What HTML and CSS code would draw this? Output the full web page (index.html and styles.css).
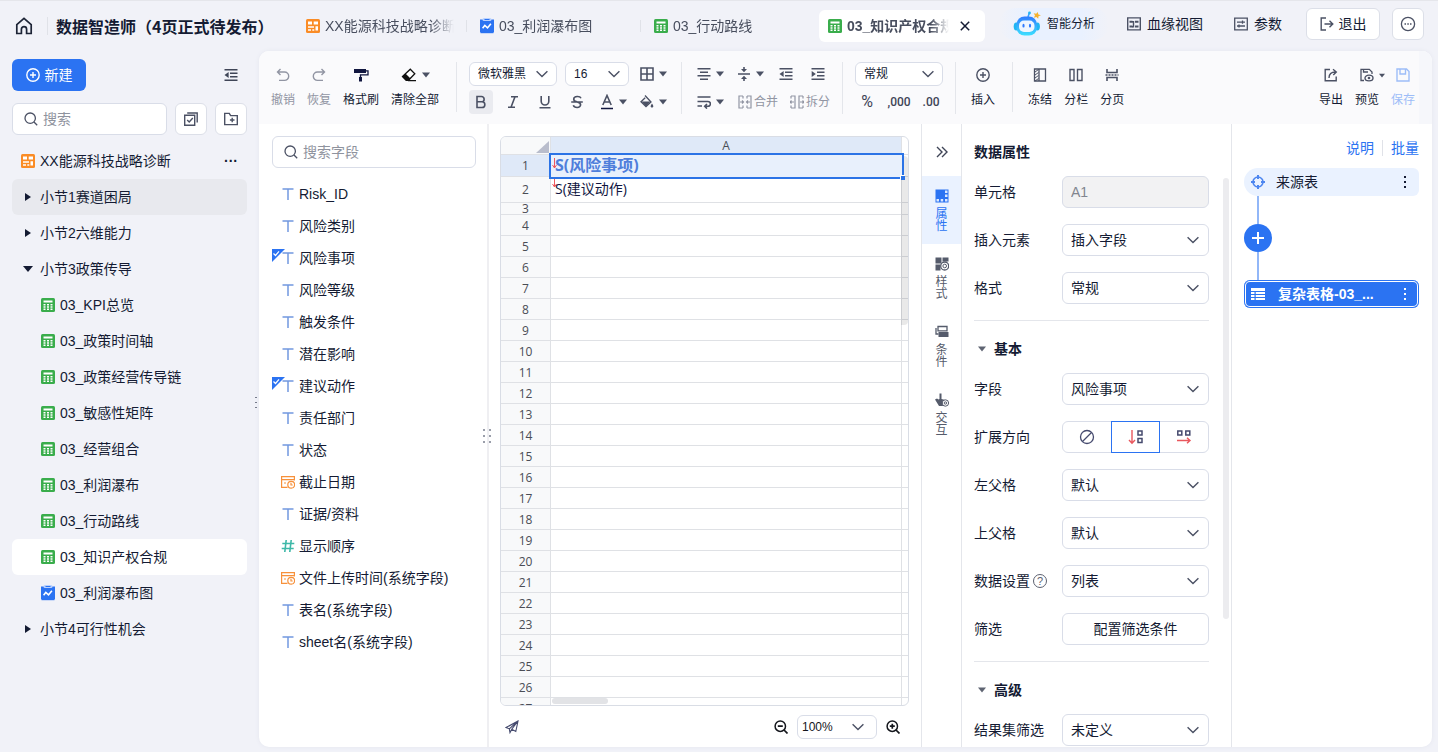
FILE: index.html
```html
<!DOCTYPE html>
<html lang="zh-CN">
<head>
<meta charset="utf-8">
<title>数据智造师</title>
<link rel="stylesheet" href="styles.css">
</head>
<body>
<svg class="sprite" aria-hidden="true">
  <symbol id="i-dash" viewBox="0 0 14 14"><rect width="14" height="14" rx="1.5" fill="#fa8c26"/><path d="M2 2.5h4v3H2zM7.7 2.5H12v3H7.7zM2 7.2h6v1.6H2zM9.5 7.2H12v4.3H9.5zM2 10.2h3v1.6H2zM6.3 10.2h2v1.6h-2z" fill="#fff"/></symbol>
  <symbol id="i-calc" viewBox="0 0 14 14"><rect width="14" height="14" rx="1.5" fill="#3aad4c"/><path d="M2.5 2.4h9v2.2h-9zM2.5 6h2v1.6h-2zM6 6h2v1.6H6zM9.5 6h2v1.6h-2zM2.5 8.3h2v1.5h-2zM6 8.3h2v1.5H6zM9.5 8.3h2v1.5h-2zM2.5 10.5h2V12h-2zM6 10.5h2V12H6zM9.5 10.5h2V12h-2z" fill="#fff"/></symbol>
  <symbol id="i-chart" viewBox="0 0 14 16"><path d="M0 1.5h14v12.7H0z" fill="#2b73f2"/><path d="M.5 13h13v2.2H.5z" fill="#2b73f2"/><rect x="2.500" y="0" width="9" height="3" rx="1.5" fill="#b9d1ff"/><rect x="4.500" y="1" width="5" height="1" fill="#2b73f2"/><path d="M2.6 10.2l2.200-2.700 2.700 2.400 3.400-4.200" fill="none" stroke="#fff" stroke-width="1.6"/></symbol>
  <symbol id="i-chev" viewBox="0 0 14 14"><path d="M1.600 4.200L7 9.600l5.400-5.400" fill="none" stroke="currentColor" stroke-width="1.400"/></symbol>
  <symbol id="i-caret" viewBox="0 0 8 6"><path d="M0 .5h8L4 5.500z" fill="currentColor"/></symbol>
  <symbol id="i-search" viewBox="0 0 14 14"><g fill="none" stroke="currentColor" stroke-width="1.300"><circle cx="6.200" cy="6.200" r="5.200"/><path d="M10 10l3.200 3.200"/></g></symbol>
  <symbol id="i-text" viewBox="0 0 14 14"><path d="M1.500 1.900h11M7 1.500V13" fill="none" stroke="#7298e0" stroke-width="1.500"/></symbol>
  <symbol id="i-num" viewBox="0 0 14 14"><path d="M1.300 4.500h12M.7 9.500h12M5.200 1L3.800 13M10.200 1L8.800 13" fill="none" stroke="#3db8a8" stroke-width="1.600"/></symbol>
  <symbol id="i-date" viewBox="0 0 14 14"><g fill="none" stroke="#f7913b" stroke-width="1.200"><path d="M6.500 12.400H.6V1.600h12.800v3.900M.6 4.600h12.800"/><circle cx="10.200" cy="9.700" r="3.400"/><path d="M10 7.800v2.200h1.700M3 8h2"/></g></symbol>
  <symbol id="i-check" viewBox="0 0 13 13"><path d="M0 0h13L0 13z" fill="#2b73f2"/><path d="M1.500 4.500l2 2L7 2.300" fill="none" stroke="#fff" stroke-width="1.200"/></symbol>
  <symbol id="i-plus" viewBox="0 0 14 14"><g fill="none" stroke="currentColor" stroke-width="1.400"><circle cx="7" cy="7" r="6.200"/><path d="M7 4v6M4 7h6"/></g></symbol>
  <symbol id="i-dots" viewBox="0 0 4 14"><path d="M1 1h2v2H1zM1 6h2v2H1zM1 11h2v2H1z" fill="currentColor"/></symbol>
  <symbol id="i-outdent" viewBox="0 0 14 14"><path d="M.5 1.800h13M6 5.300h7.500M6 8.800h7.500M.5 12.300h13" stroke="currentColor" stroke-width="1.600"/><path d="M4.600 4v6L.5 7z" fill="currentColor"/></symbol>
  <symbol id="i-indent" viewBox="0 0 14 14"><path d="M.5 1.800h13M6 5.300h7.500M6 8.800h7.500M.5 12.300h13" stroke="currentColor" stroke-width="1.600"/><path d="M.7 4v6l4.100-3z" fill="currentColor"/></symbol>
</svg>

<div class="app">
  <header class="topbar">
    <a class="home" href="#" aria-label="首页"><svg width="18" height="18" viewBox="0 0 18 18"><path d="M1.800 7.600L9 1.400l7.200 6.200v8.900h-4.600v-4.300a2.600 2.600 0 0 0-5.200 0v4.300H1.800z" fill="none" stroke="currentColor" stroke-width="1.700"/></svg></a>
    <h1>数据智造师（4页正式待发布）</h1>
    <nav class="tabs">
      <a class="tab" href="#"><svg class="doc"><use href="#i-dash"/></svg><span>XX能源科技战略诊断</span></a>
      <a class="tab" href="#"><svg class="doc"><use href="#i-chart"/></svg><span>03_利润瀑布图</span></a>
      <a class="tab" href="#"><svg class="doc"><use href="#i-calc"/></svg><span>03_行动路线</span></a>
      <div class="tab on"><svg class="doc"><use href="#i-calc"/></svg><span>03_知识产权合规</span><button class="bare" aria-label="关闭"><svg width="10" height="10" viewBox="0 0 10 10"><path d="M.8.8l8.400 8.400M9.200.8L.8 9.200" stroke="currentColor" stroke-width="1.500"/></svg></button></div>
    </nav>
    <div class="actions">
      <button class="ai"><svg width="28" height="26" viewBox="0 0 28 26"><defs><linearGradient id="bot" x2="0" y2="1"><stop stop-color="#2f7bff"/><stop offset="1" stop-color="#3ce0ff"/></linearGradient></defs><path d="M15 6l1.300-4" stroke="#35a0ff" stroke-width="1.500"/><circle cx="16.500" cy="2" r="1.400" fill="#22b5f5"/><ellipse cx="3.200" cy="15.500" rx="2.500" ry="4" fill="#1fb6f2"/><ellipse cx="24.400" cy="15.500" rx="2.500" ry="4" fill="#1fb6f2"/><rect x="3.500" y="5.500" width="20.500" height="19" rx="8" fill="url(#bot)"/><rect x="6" y="9.500" width="15.500" height="11.500" rx="5" fill="#eef6ff"/><ellipse cx="10.500" cy="14.700" rx="1.100" ry="1.900" fill="#2f7bff"/><ellipse cx="17" cy="14.700" rx="1.100" ry="1.900" fill="#2f7bff"/><path d="M24.700 1l.7 2.400 2.500.8-2.400 1-.3 2.600-1.800-1.700-2.600.7L22 4.500 20.700 2.200l2.500.5z" fill="#f6b12c"/></svg>智能分析</button>
      <button class="link"><svg width="14" height="14" viewBox="0 0 14 14"><path d="M.7.9h12.600v12H.7zM5 4.700h1.500v5H5" fill="none" stroke="currentColor" stroke-width="1.400"/><path d="M2.500 3.700h3v2h-3zM2.500 8.500h3v2h-3zM8 3.700h3.500v2H8zM8 8.500h3.500v2H8z" fill="currentColor"/></svg>血缘视图</button>
      <button class="link"><svg width="14" height="14" viewBox="0 0 14 14"><path d="M.7 1.200h12.600v11.600H.7zM3 5.200h8M3 9h8M8.500 3.500v3.200M5 7.400v3.200" fill="none" stroke="currentColor" stroke-width="1.300"/></svg>参数</button>
      <button class="box exit"><svg width="14" height="14" viewBox="0 0 14 14"><path d="M6 1H1.200v12H6M4.500 7h8M9.500 3.700L12.800 7l-3.300 3.300" fill="none" stroke="currentColor" stroke-width="1.400"/></svg>退出</button>
      <button class="box sq" aria-label="更多"><svg width="16" height="16" viewBox="0 0 16 16"><circle cx="8" cy="8" r="6.600" fill="none" stroke="currentColor" stroke-width="1.300"/><path d="M4.500 7.300H6v1.500H4.500zM7.300 7.300h1.500v1.500H7.300zM10 7.300h1.500v1.500H10z" fill="currentColor"/></svg></button>
    </div>
  </header>

  <div class="body">
    <aside class="side">
      <div class="side-head">
        <button class="primary"><svg class="i14"><use href="#i-plus"/></svg>新建</button>
        <button class="bare" aria-label="收起"><svg class="i14"><use href="#i-outdent"/></svg></button>
      </div>
      <div class="side-search">
        <label class="search"><svg class="i14"><use href="#i-search"/></svg><input type="text" placeholder="搜索" aria-label="搜索"></label>
        <button class="box sq" aria-label="多选"><svg width="14" height="14" viewBox="0 0 14 14"><path d="M.7 3.300h10v10h-10zM3.200 1h10v9.500M3.200 8l2 2 3.600-4" fill="none" stroke="currentColor" stroke-width="1.400"/></svg></button>
        <button class="box sq" aria-label="新建文件夹"><svg width="14" height="14" viewBox="0 0 14 14"><path d="M.7 1.400h4.600l1.300 2.200h6.700v9H.7zM8.200 5.700v4.600M5.900 8h4.600" fill="none" stroke="currentColor" stroke-width="1.400"/></svg></button>
      </div>
      <nav class="tree">
        <a href="#" class="root"><svg class="doc"><use href="#i-dash"/></svg>XX能源科技战略诊断<i>···</i></a>
        <a href="#" class="sec hover"><b class="tri"></b>小节1赛道困局</a>
        <a href="#" class="sec"><b class="tri"></b>小节2六维能力</a>
        <a href="#" class="sec"><b class="tri open"></b>小节3政策传导</a>
        <a href="#" class="leaf"><svg class="doc"><use href="#i-calc"/></svg>03_KPI总览</a>
        <a href="#" class="leaf"><svg class="doc"><use href="#i-calc"/></svg>03_政策时间轴</a>
        <a href="#" class="leaf"><svg class="doc"><use href="#i-calc"/></svg>03_政策经营传导链</a>
        <a href="#" class="leaf"><svg class="doc"><use href="#i-calc"/></svg>03_敏感性矩阵</a>
        <a href="#" class="leaf"><svg class="doc"><use href="#i-calc"/></svg>03_经营组合</a>
        <a href="#" class="leaf"><svg class="doc"><use href="#i-calc"/></svg>03_利润瀑布</a>
        <a href="#" class="leaf"><svg class="doc"><use href="#i-calc"/></svg>03_行动路线</a>
        <a href="#" class="leaf on"><svg class="doc"><use href="#i-calc"/></svg>03_知识产权合规</a>
        <a href="#" class="leaf"><svg class="doc"><use href="#i-chart"/></svg>03_利润瀑布图</a>
        <a href="#" class="sec"><b class="tri"></b>小节4可行性机会</a>
      </nav>
      <span class="grip"></span>
    </aside>

    <main class="card">
      <div class="toolbar">
        <div class="big-group first">
          <button class="big dim"><svg width="14" height="14" viewBox="0 0 14 14"><path d="M4.500 1L1.500 4l3 3M1.500 4h7a4 4 0 0 1 0 8.400H3" fill="none" stroke="currentColor" stroke-width="1.400"/></svg>撤销</button>
          <button class="big dim"><svg width="14" height="14" viewBox="0 0 14 14"><path d="M9.500 1l3 3-3 3M12.500 4h-7a4 4 0 0 0 0 8.400H11" fill="none" stroke="currentColor" stroke-width="1.400"/></svg>恢复</button>
          <button class="big"><svg width="16" height="14" viewBox="0 0 16 14"><path d="M1 1h12v4H1zM6 9h3v4.500H6z" fill="#11163f"/><path d="M13 2.800h2v4H7.500V10" fill="none" stroke="#11163f" stroke-width="1.300"/></svg>格式刷</button>
          <button class="big"><span class="pair"><svg width="16" height="14" viewBox="0 0 16 14"><path d="M9.300 1.200l4.500 4.500-6.300 6.600H5.200L1.500 8.600z" fill="#fff" stroke="#111" stroke-width="1.300"/><path d="M4.500 5.500l5 5-2 2H5L1.200 8.700zM7 12h8v1.300H7z" fill="#111"/></svg><svg class="caret"><use href="#i-caret"/></svg></span>清除全部</button>
        </div>
        <div class="grid-group">
          <div class="line">
            <span class="select sm w88"><select aria-label="字体"><option>微软雅黑</option></select><svg class="i14"><use href="#i-chev"/></svg></span>
            <span class="select sm w64"><select aria-label="字号"><option>16</option></select><svg class="i14"><use href="#i-chev"/></svg></span>
            <button class="drop" aria-label="边框"><svg width="14" height="14" viewBox="0 0 14 14"><path d="M1 1h12v12H1zM7 1v12M1 7h12" fill="none" stroke="currentColor" stroke-width="1.600"/></svg><svg class="caret"><use href="#i-caret"/></svg></button>
          </div>
          <div class="line">
            <button class="tool on" aria-label="加粗"><svg width="14" height="14" viewBox="0 0 14 14"><path d="M3 1.500h4.500a2.600 2.600 0 0 1 0 5.300H3zM3 6.800h5a2.800 2.800 0 0 1 0 5.700H3z" fill="none" stroke="currentColor" stroke-width="1.600"/></svg></button>
            <button class="tool" aria-label="斜体"><svg width="14" height="14" viewBox="0 0 14 14"><path d="M5 1.700h7M2 12.300h7M9 1.700L5 12.300" stroke="currentColor" stroke-width="1.600"/></svg></button>
            <button class="tool" aria-label="下划线"><svg width="14" height="14" viewBox="0 0 14 14"><path d="M3.200 1v5.200a3.800 3.800 0 0 0 7.600 0V1M1.500 12.800h11" fill="none" stroke="currentColor" stroke-width="1.600"/></svg></button>
            <button class="tool" aria-label="删除线"><svg width="14" height="14" viewBox="0 0 14 14"><path d="M11 3.200C10 .9 4 .8 3.700 4c-.1 2 2 2.500 3.500 3 2 .5 3.600 1.200 3.400 3-.4 3.200-6.300 3.200-7.300.2M1.200 7h11.600" fill="none" stroke="currentColor" stroke-width="1.600"/></svg></button>
            <button class="drop" aria-label="文字颜色"><svg width="14" height="16" viewBox="0 0 14 16"><path d="M2.800 11L7 1.500 11.200 11M4.300 8h5.400" fill="none" stroke="currentColor" stroke-width="1.600"/><path d="M1 14.500h12" stroke="#11163f" stroke-width="1.400"/></svg><svg class="caret"><use href="#i-caret"/></svg></button>
            <button class="drop" aria-label="填充颜色"><svg width="14" height="14" viewBox="0 0 14 14"><path d="M5 .5l6 6.500-5 4.500L1 6.800l4.200-4" fill="none" stroke="currentColor" stroke-width="1.300"/><path d="M1.500 6.500h9L6 11.400zM12 8.500c2 2.800 1.500 4 0 4s-2-1.200 0-4z" fill="currentColor"/></svg><svg class="caret"><use href="#i-caret"/></svg></button>
          </div>
        </div>
        <div class="grid-group">
          <div class="line">
            <button class="drop" aria-label="水平对齐"><svg width="14" height="14" viewBox="0 0 14 14"><path d="M.5 1.800h13M3 5.300h8M.5 8.800h13M3 12.300h8" stroke="currentColor" stroke-width="1.600"/></svg><svg class="caret"><use href="#i-caret"/></svg></button>
            <button class="drop" aria-label="垂直对齐"><svg width="14" height="14" viewBox="0 0 14 14"><path d="M1 7h12M7 0v3M7 11v3" stroke="currentColor" stroke-width="1.600"/><path d="M4 2h6L7 5.300zM4 12h6L7 8.700z" fill="currentColor"/></svg><svg class="caret"><use href="#i-caret"/></svg></button>
            <button class="tool" aria-label="减少缩进"><svg class="i14"><use href="#i-outdent"/></svg></button>
            <button class="tool" aria-label="增加缩进"><svg class="i14"><use href="#i-indent"/></svg></button>
          </div>
          <div class="line">
            <button class="drop" aria-label="换行"><svg width="14" height="14" viewBox="0 0 14 14"><path d="M.5 2h13M.5 6.500H11a2.400 2.400 0 0 1 0 4.800H8.500M.5 11h4.500M10 9l-2.300 2.300L10 13.600" fill="none" stroke="currentColor" stroke-width="1.600"/></svg><svg class="caret"><use href="#i-caret"/></svg></button>
            <button class="word dim"><svg width="14" height="14" viewBox="0 0 14 14"><path d="M5 1H1v12h4M9 1h4v12H9M5 1v2.500M9 1v2.500M5 10.500V13M9 10.500V13M2 7h3.500M8.500 7H12M4 5.500L5.500 7 4 8.500M10 5.500L8.500 7 10 8.500" fill="none" stroke="currentColor" stroke-width="1.200"/></svg>合并</button>
            <button class="word dim"><svg width="14" height="14" viewBox="0 0 14 14"><path d="M1 1h4v12H1M13 1H9v12h4M1 1v2.500M13 1v2.500M1 10.500V13M13 10.500V13M0 7h4M10 7h4M1.500 5.500L0 7l1.500 1.500M12.500 5.500L14 7l-1.500 1.500" fill="none" stroke="currentColor" stroke-width="1.200"/></svg>拆分</button>
          </div>
        </div>
        <div class="grid-group">
          <div class="line"><span class="select sm w88"><select aria-label="数字格式"><option>常规</option></select><svg class="i14"><use href="#i-chev"/></svg></span></div>
          <div class="line"><button class="tool pct">%</button><button class="tool fmt">,000</button><button class="tool fmt">.00</button></div>
        </div>
        <div class="big-group"><button class="big"><svg class="i14"><use href="#i-plus"/></svg>插入</button></div>
        <div class="big-group last">
          <button class="big"><svg width="14" height="14" viewBox="0 0 14 14"><path d="M1.500 1h11v12h-11zM6 1v12" fill="none" stroke="currentColor" stroke-width="1.300"/><path d="M2 4l3.500-2.500M2 7l3.500-2.500M2 10l3.500-2.500M2 13l3.500-2.500" stroke="currentColor"/></svg>冻结</button>
          <button class="big"><svg width="14" height="14" viewBox="0 0 14 14"><path d="M1 1.500h4v11H1zM8.500 1.500h4.500v11H8.500z" fill="none" stroke="currentColor" stroke-width="1.400"/></svg>分栏</button>
          <button class="big"><svg width="14" height="14" viewBox="0 0 14 14"><path d="M2 1v3.500h10V1M2 13V9.500h10V13" fill="none" stroke="currentColor" stroke-width="1.600"/><path d="M.5 7h13" stroke="currentColor" stroke-width="1.300" stroke-dasharray="2 1"/></svg>分页</button>
        </div>
        <div class="big-group end">
          <button class="big"><svg width="14" height="14" viewBox="0 0 14 14"><path d="M6 1.500H1.200v11.300h11V8.500M5 10c0-4 2-6 6.500-6M9 1.200L12.300 4 9.300 7" fill="none" stroke="currentColor" stroke-width="1.400"/></svg>导出</button>
          <button class="big"><span class="pair over"><svg width="14" height="14" viewBox="0 0 14 14"><path d="M4 12.500H1V1.300h8.300L12 4v2M3.500 1.500V4H8" fill="none" stroke="currentColor" stroke-width="1.300"/><ellipse cx="9" cy="10" rx="4" ry="2.900" fill="none" stroke="currentColor" stroke-width="1.400"/><circle cx="9" cy="10" r="1.300" fill="currentColor"/></svg><svg class="caret mini"><use href="#i-caret"/></svg></span>预览</button>
          <button class="big save"><svg width="14" height="14" viewBox="0 0 14 14"><path d="M1 1h9.500L13 3.500V13H1zM4 1v5h5.500V1" fill="none" stroke="currentColor" stroke-width="1.400"/></svg>保存</button>
        </div>
      </div>

      <div class="work">
        <section class="fields">
          <label class="search"><svg class="i14"><use href="#i-search"/></svg><input type="text" placeholder="搜索字段" aria-label="搜索字段"></label>
          <ul>
            <li><svg class="i14"><use href="#i-text"/></svg>Risk_ID</li>
            <li><svg class="i14"><use href="#i-text"/></svg>风险类别</li>
            <li><svg class="mark"><use href="#i-check"/></svg><svg class="i14"><use href="#i-text"/></svg>风险事项</li>
            <li><svg class="i14"><use href="#i-text"/></svg>风险等级</li>
            <li><svg class="i14"><use href="#i-text"/></svg>触发条件</li>
            <li><svg class="i14"><use href="#i-text"/></svg>潜在影响</li>
            <li><svg class="mark"><use href="#i-check"/></svg><svg class="i14"><use href="#i-text"/></svg>建议动作</li>
            <li><svg class="i14"><use href="#i-text"/></svg>责任部门</li>
            <li><svg class="i14"><use href="#i-text"/></svg>状态</li>
            <li><svg class="i14"><use href="#i-date"/></svg>截止日期</li>
            <li><svg class="i14"><use href="#i-text"/></svg>证据/资料</li>
            <li><svg class="i14"><use href="#i-num"/></svg>显示顺序</li>
            <li><svg class="i14"><use href="#i-date"/></svg>文件上传时间(系统字段)</li>
            <li><svg class="i14"><use href="#i-text"/></svg>表名(系统字段)</li>
            <li><svg class="i14"><use href="#i-text"/></svg>sheet名(系统字段)</li>
          </ul>
          <span class="grip wide"></span>
        </section>

        <section class="canvas">
          <div class="sheet">
            <table>
              <thead><tr><th class="corner"><svg width="13" height="12" viewBox="0 0 13 12"><path d="M13 0v12H0z" fill="#b9bdcc"/></svg></th><th class="col">A</th><td></td></tr></thead>
              <tbody>
                <tr class="r1"><th>1</th><td><div class="picked"><svg width="5" height="11" viewBox="0 0 5 11"><path d="M2.500 0v10M.5 7l2 3 2-3" fill="none" stroke="#f0595f"/></svg>S(风险事项)</div></td><td></td></tr>
                <tr class="r2"><th>2</th><td><div class="cell"><svg width="5" height="11" viewBox="0 0 5 11"><path d="M2.500 0v10M.5 7l2 3 2-3" fill="none" stroke="#f0595f"/></svg>S(建议动作)</div></td><td></td></tr>
                <tr class="r3"><th>3</th><td></td><td></td></tr>
                <tr><th>4</th><td></td><td></td></tr><tr><th>5</th><td></td><td></td></tr><tr><th>6</th><td></td><td></td></tr>
                <tr><th>7</th><td></td><td></td></tr><tr><th>8</th><td></td><td></td></tr><tr><th>9</th><td></td><td></td></tr>
                <tr><th>10</th><td></td><td></td></tr><tr><th>11</th><td></td><td></td></tr><tr><th>12</th><td></td><td></td></tr>
                <tr><th>13</th><td></td><td></td></tr><tr><th>14</th><td></td><td></td></tr><tr><th>15</th><td></td><td></td></tr>
                <tr><th>16</th><td></td><td></td></tr><tr><th>17</th><td></td><td></td></tr><tr><th>18</th><td></td><td></td></tr>
                <tr><th>19</th><td></td><td></td></tr><tr><th>20</th><td></td><td></td></tr><tr><th>21</th><td></td><td></td></tr>
                <tr><th>22</th><td></td><td></td></tr><tr><th>23</th><td></td><td></td></tr><tr><th>24</th><td></td><td></td></tr>
                <tr><th>25</th><td></td><td></td></tr><tr><th>26</th><td></td><td></td></tr><tr><th>27</th><td></td><td></td></tr>
              </tbody>
            </table>
            <span class="vbar"></span><span class="hbar"></span>
          </div>
          <div class="sheet-foot">
            <button class="bare send" aria-label="发送"><svg width="14" height="14" viewBox="0 0 14 14"><path d="M1 7.600L13 1l-2.200 10.500-4-2.300L5 12.600 4.300 8.800zM13 1L4.300 8.800M13 1L6.800 9.200" fill="none" stroke="#454a6e" stroke-width="1.100"/></svg></button>
            <button class="bare" aria-label="缩小"><svg width="14" height="14" viewBox="0 0 14 14"><path d="M10 10l3.500 3.500M3.800 6.200h5" stroke="currentColor" stroke-width="1.700"/><circle cx="6.300" cy="6.200" r="5.200" fill="none" stroke="currentColor" stroke-width="1.500"/></svg></button>
            <span class="select sm w80"><select aria-label="缩放"><option>100%</option></select><svg class="i14"><use href="#i-chev"/></svg></span>
            <button class="bare" aria-label="放大"><svg width="14" height="14" viewBox="0 0 14 14"><path d="M10 10l3.500 3.500M3.800 6.200h5M6.300 3.700v5" stroke="currentColor" stroke-width="1.700"/><circle cx="6.300" cy="6.200" r="5.200" fill="none" stroke="currentColor" stroke-width="1.500"/></svg></button>
          </div>
        </section>

        <nav class="rail">
          <button class="fold" aria-label="折叠"><svg width="12" height="12" viewBox="0 0 12 12"><path d="M1 1l5 5-5 5M6 1l5 5-5 5" fill="none" stroke="currentColor" stroke-width="1.400"/></svg></button>
          <button class="on"><svg width="14" height="14" viewBox="0 0 14 14"><path d="M.5.5h13v13H.5z" fill="#2b73f2"/><path d="M10 1.500h2.500V4H10zM10 5.500h2.500V8H10zM1.500 10H4v2.500H1.500zM5.700 10h2.500v2.500H5.700zM10 10h2.500v2.500H10z" fill="#dce9ff"/></svg><span>属性</span></button>
          <button><svg width="14" height="14" viewBox="0 0 14 14"><path d="M.5.5h6v6h-6zM.5 7.500h5v6h-5zM7.500.5h6v4h-6z" fill="currentColor"/><circle cx="9.700" cy="9" r="4" fill="#fff" stroke="currentColor" stroke-width="1.300"/><circle cx="9.700" cy="9" r="1.800" fill="none" stroke="currentColor"/></svg><span>样式</span></button>
          <button><svg width="14" height="14" viewBox="0 0 14 14"><path d="M3.500 9H1V3M3 1.500h9v4.300H3z" fill="none" stroke="currentColor" stroke-width="1.300"/><path d="M3.500 7h10v5h-10z" fill="currentColor"/></svg><span>条件</span></button>
          <button><svg width="14" height="14" viewBox="0 0 14 14"><path d="M4.500.5h2V6L12 7.500V9H9v4H4L0 6.500 2 5.500l1.500 1L4.500 6z" fill="currentColor"/><circle cx="10.400" cy="10" r="3.200" fill="#fff" stroke="currentColor"/><circle cx="10.400" cy="10" r="1.200" fill="none" stroke="currentColor"/></svg><span>交互</span></button>
        </nav>

        <section class="props">
          <h2>数据属性</h2>
          <div class="rows">
            <label for="p1">单元格</label><input id="p1" type="text" value="A1" disabled>
            <label for="p2">插入元素</label><span class="select"><select id="p2"><option>插入字段</option></select><svg class="i14"><use href="#i-chev"/></svg></span>
            <label for="p3">格式</label><span class="select"><select id="p3"><option>常规</option></select><svg class="i14"><use href="#i-chev"/></svg></span>
          </div>
          <h3><svg class="caret"><use href="#i-caret"/></svg>基本</h3>
          <div class="rows">
            <label for="p4">字段</label><span class="select"><select id="p4"><option>风险事项</option></select><svg class="i14"><use href="#i-chev"/></svg></span>
            <span>扩展方向</span>
            <div class="seg">
              <button aria-label="不扩展"><svg width="16" height="16" viewBox="0 0 16 16"><circle cx="8" cy="8" r="6.500" fill="none" stroke="currentColor" stroke-width="1.300"/><path d="M3.500 12.500l9-9" stroke="currentColor" stroke-width="1.200"/></svg></button>
              <button class="on" aria-label="纵向扩展"><svg width="16" height="16" viewBox="0 0 16 16"><path d="M4 1v13M1 11l3 3.200L7 11" fill="none" stroke="#e9575d" stroke-width="1.400"/><path d="M10 2h4v4h-4zM10 9.500h4v4h-4z" fill="none" stroke="currentColor" stroke-width="1.500"/></svg></button>
              <button aria-label="横向扩展"><svg width="16" height="16" viewBox="0 0 16 16"><path d="M1.800 2h4v4h-4zM9.800 2h4v4h-4z" fill="none" stroke="currentColor" stroke-width="1.500"/><path d="M1 11.500h13M11 8.700l3 2.800-3 2.800" fill="none" stroke="#e9575d" stroke-width="1.400"/></svg></button>
            </div>
            <label for="p5">左父格</label><span class="select"><select id="p5"><option>默认</option></select><svg class="i14"><use href="#i-chev"/></svg></span>
            <label for="p6">上父格</label><span class="select"><select id="p6"><option>默认</option></select><svg class="i14"><use href="#i-chev"/></svg></span>
            <label for="p7">数据设置<i class="help">?</i></label><span class="select"><select id="p7"><option>列表</option></select><svg class="i14"><use href="#i-chev"/></svg></span>
            <span>筛选</span><button class="config">配置筛选条件</button>
          </div>
          <h3><svg class="caret"><use href="#i-caret"/></svg>高级</h3>
          <div class="rows">
            <label for="p8">结果集筛选</label><span class="select"><select id="p8"><option>未定义</option></select><svg class="i14"><use href="#i-chev"/></svg></span>
          </div>
          <span class="pbar"></span>
        </section>

        <section class="flow">
          <div class="flow-links"><a href="#">说明</a><a href="#">批量</a></div>
          <div class="node src"><svg width="16" height="16" viewBox="0 0 16 16"><g fill="none" stroke="#4d86f0"><circle cx="8" cy="8" r="5" stroke-width="1.600"/><path d="M8 1v4M8 11v4M1 8h4M11 8h4" stroke-width="2"/></g></svg><span>来源表</span><button class="bare" aria-label="更多"><svg class="dots"><use href="#i-dots"/></svg></button></div>
          <span class="wire"></span>
          <button class="add" aria-label="添加"><svg width="14" height="14" viewBox="0 0 14 14"><path d="M7 1v12M1 7h12" stroke="#fff" stroke-width="2"/></svg></button>
          <span class="wire"></span>
          <div class="node cur"><svg width="16" height="14" viewBox="-1 0 16 14"><path d="M0 1h14v3H0zM0 5h3.500v2H0zM4.700 5H14v2H4.700zM0 8h3.500v2H0zM4.700 8H14v2H4.700zM0 11h3.500v2H0zM4.700 11H14v2H4.700z" fill="#fff"/></svg><span>复杂表格-03_...</span><button class="bare" aria-label="更多"><svg class="dots"><use href="#i-dots"/></svg></button></div>
        </section>
      </div>
    </main>
  </div>
</div>
</body>
</html>
```
FILE: styles.css
```css
* { box-sizing: border-box; }
body { margin: 0; background: #f1f2f8; color: #141b33; font: 14px/20px "Liberation Sans", "Noto Sans CJK SC", sans-serif; }
button, input, select { font: inherit; color: inherit; margin: 0; }
button { display: flex; align-items: center; justify-content: center; padding: 0; border: 0; background: none; white-space: nowrap; }
a { color: inherit; text-decoration: none; }
i { font-style: normal; }
svg { display: block; flex: none; }
h1, h2, h3, ul { margin: 0; padding: 0; }
.sprite { position: absolute; width: 0; height: 0; }
.i14 { width: 14px; height: 14px; }
.doc { width: 14px; height: 16px; }
.caret { width: 8px; height: 6px; }
.app { display: flex; flex-direction: column; height: 100vh; border-top: 1px solid #e5e6eb; }

.topbar { display: flex; align-items: center; height: 50px; flex: none; padding: 0 14px 0 15px; }
.home { padding-right: 14px; border-right: 1px solid #e0e2e8; color: #1d2436; }
h1 { margin-left: 8px; width: 241px; flex: none; font-size: 16px; line-height: 24px; font-weight: 700; white-space: nowrap; font-family: "Noto Sans CJK SC", sans-serif; }
.tabs { display: flex; gap: 8px; flex: 1; min-width: 0; }
.tab { position: relative; display: flex; align-items: center; gap: 5px; width: 166px; flex: none; height: 32px; padding: 0 9px; border-radius: 6px; color: #484e5e; white-space: nowrap; }
.tab span { flex: 1; min-width: 0; overflow: hidden; mask-image: linear-gradient(90deg, #000 82%, transparent); }
.tab:nth-child(-n+2)::after { content: ""; position: absolute; right: -4px; top: 10px; height: 12px; border-left: 1px solid #e0e2e8; }
.tab.on { background: #fff; font-weight: 700; }
.tab.on .bare { width: 22px; color: #141b33; }
.actions { display: flex; align-items: center; flex: none; height: 32px; align-self: flex-start; margin-top: 7px; }
.ai { height: 32px; width: 110px; gap: 6px; border-radius: 16px; font-size: 12px; background: linear-gradient(90deg, #f1f2f8, #e9f1ff 25%, #e9f1ff 75%, #f1f2f8); }
.link { gap: 6px; margin-left: 18px; }
.link + .link { margin-left: 31px; }
.link svg, .box svg { color: #4b5164; }
.box { height: 32px; background: #fff; border: 1px solid #dcdfe8; border-radius: 6px; }
.sq { width: 32px; flex: none; }
.exit { width: 74px; gap: 5px; margin: 0 12px 0 24px; }

.body { flex: 1; min-height: 0; display: flex; padding: 0 6px 5px 0; }
.side { position: relative; width: 259px; flex: none; padding: 8px 12px; }
.side-head { display: flex; justify-content: space-between; padding-right: 9px; color: #3f4557; }
.primary { width: 74px; height: 32px; gap: 5px; background: #2b73f2; color: #fff; border-radius: 6px; }
.side-search { display: flex; gap: 8px; margin: 12px 0 8px; }
.search { display: flex; align-items: center; gap: 5px; height: 32px; flex: 1; min-width: 0; padding: 0 11px; background: #fff; border: 1px solid #d9dde8; border-radius: 6px; color: #4b5164; }
.search input { width: 100%; min-width: 0; padding: 0; border: 0; outline: 0; background: none; }
.search input::placeholder { color: #8f939e; }
.tree a { display: flex; align-items: center; height: 36px; border-radius: 6px; padding: 0 9px; gap: 5px; }
.tree a.leaf { padding-left: 29px; }
.tree a.hover { background: #e8e9ee; }
.tree a.on { background: #fff; }
.root i { margin-left: auto; font-weight: 700; }
.tri { width: 14px; display: flex; justify-content: center; }
.tri::before { content: ""; border: solid transparent; border-width: 4px 0 4px 6px; border-left-color: #141b33; }
.tri.open::before { border-width: 6px 5px 0; border-color: #141b33 transparent transparent; }
.grip { position: absolute; right: 1px; top: 344px; width: 4px; height: 15px; background: radial-gradient(circle, #767b8a 1px, transparent 1px) 0 0 / 4px 5px; }

.card { flex: 1; min-width: 0; display: flex; flex-direction: column; background: #fff; border-radius: 10px; overflow: hidden; box-shadow: 0 0 4px #e4e6ee; }
.toolbar { display: flex; align-items: flex-start; flex: none; height: 73px; padding: 11px 0 0 12px; background: #fafafc; border-right: 13px solid #f6f7fb; font-size: 12px; line-height: 16px; }
.toolbar svg { color: #4b5164; }
.big-group { display: flex; gap: 12px; height: 50px; padding: 0 17px 0 15px; border-right: 1px solid #e4e6eb; }
.big-group.first { padding-left: 0; }
.big-group.last { border: 0; }
.big-group.end { margin-left: auto; padding-right: 4px; border: 0; }
.big { flex-direction: column; justify-content: flex-start; gap: 6px; padding-top: 2px; height: 50px; }
.big > svg, .pair { height: 22px; padding: 4px 0; }
.pair { display: flex; align-items: center; gap: 5px; }
.pair.over { position: relative; }
.pair .mini { position: absolute; left: 19px; width: 6px; height: 5px; }
.big.dim, .word.dim, .toolbar .dim svg { color: #9195a3; }
.big.save, .toolbar .save svg { color: #9dbdf8; }
.grid-group { display: flex; flex-direction: column; gap: 4px; padding: 0 12px; border-right: 1px solid #e4e6eb; }
.line { display: flex; gap: 8px; height: 24px; }
.drop { width: 32px; padding-left: 3px; gap: 5px; justify-content: flex-start; }
.tool { width: 24px; border-radius: 4px; }
.tool.on { background: #eaebf0; }
.word { padding-left: 4px; gap: 2px; }
.pct { font-size: 16px; color: #3f4557; font-family: Roboto, sans-serif; }
.fmt { font: 500 12px/16px Roboto, sans-serif; color: #3f4557; }

.select { display: grid; align-items: center; height: 32px; min-width: 0; }
.select > * { grid-area: 1 / 1; }
.select svg { justify-self: end; margin-right: 9px; pointer-events: none; color: #4b5164; }
.select select, .rows input { appearance: none; width: 100%; height: 100%; padding: 0 28px 0 8px; background: #fff; border: 1px solid #d9dde8; border-radius: 6px; outline: 0; }
.select.sm { height: 24px; font-size: 12px; }
.select.sm svg { margin-right: 8px; }
.select.sm select { padding: 0 0 0 8px; }
.w88 { width: 88px; }
.w64 { width: 64px; }
.w80 { width: 80px; }
.sheet-foot .select.sm select { padding-left: 4px; }
.sheet-foot .select.sm svg { margin-right: 12px; }

.work { flex: 1; min-height: 0; display: flex; }
.fields { position: relative; width: 230px; flex: none; padding: 12px 11px 0 13px; border-right: 2px solid #efeff2; }
.fields ul { list-style: none; margin-top: 10px; }
.fields li { position: relative; display: flex; align-items: center; height: 32px; padding-left: 9px; gap: 4px; white-space: nowrap; }
.mark { position: absolute; left: 0; top: 7px; width: 13px; height: 13px; }
.grip.wide { right: -6px; top: 303px; width: 12px; height: 18px; background: radial-gradient(circle, #9a9eaa 1px, transparent 1px) 0 0 / 6px 6px; }

.canvas { flex: 1; min-width: 0; display: flex; flex-direction: column; padding: 12px 12px 0 11px; }
.sheet { position: relative; flex: 1; min-height: 0; overflow: hidden; border: 1px solid #d9dde5; border-radius: 6px; font-family: "Open Sans", "Noto Sans CJK SC", sans-serif; }
table { width: 100%; table-layout: fixed; border-collapse: separate; border-spacing: 0; }
th, td { height: 21px; padding: 0; border: solid #dfe1e5; border-width: 0 1px 1px 0; font-weight: 400; font-size: 12px; line-height: 11px; color: #4a4d55; }
th:first-child { width: 50px; background: #f8f9fa; }
td:last-child { width: 6px; border-right: 0; }
thead th, thead td { height: 18px; }
thead .corner svg { margin-left: 35px; margin-top: 3px; }
thead .col, .r1 th:first-child { background: #dfe9f8; }
.r1 th, .r1 td { height: 22px; }
.r2 th, .r2 td { height: 26px; }
.r3 th, .r3 td { height: 12px; }
.r1 td, .r2 td { position: relative; }
.picked { position: absolute; inset: -2px -3px -3px -2px; z-index: 1; display: flex; align-items: flex-start; padding: 1px 0 0 1px; border: 2px solid #2b73e6; background: #e8f0fc; color: #4f7edb; font-size: 16px; line-height: 18px; font-weight: 700; }
.picked::after { content: ""; position: absolute; right: -3px; bottom: -3px; width: 4px; height: 4px; border: solid #fff; border-width: 1px 0 0 1px; background: #2b73e6; }
.picked svg, .cell svg { margin-right: -2px; }
.picked svg { margin-top: 2px; }
.cell { display: flex; height: 25px; padding-left: 1px; font-size: 14px; line-height: 24px; color: #11163f; white-space: nowrap; }
.vbar { position: absolute; right: 0; top: 19px; width: 7px; height: 169px; border-radius: 0 4px 4px 0; background: #00000016; }
.hbar { position: absolute; left: 51px; bottom: 1px; width: 56px; height: 6px; border-radius: 3px; background: #e2e3e6; }
.sheet-foot { display: flex; align-items: center; flex: none; height: 41px; padding-right: 9px; gap: 9px; color: #14161c; }
.send { margin: 0 auto 0 5px; }

.rail { width: 41px; flex: none; display: flex; flex-direction: column; border: solid #e4e6eb; border-width: 0 1px; color: #555b6b; }
.rail button { flex-direction: column; height: 68px; gap: 5px; font-size: 12px; line-height: 12px; }
.rail .fold { height: 52px; padding-top: 4px; color: #3f4557; }
.rail span { width: 12px; white-space: normal; word-break: break-all; }
.rail .on { background: #eaf2ff; color: #2b73f2; }

.props { position: relative; width: 270px; flex: none; padding: 18px 22px 0 12px; border-right: 1px solid #e4e6eb; overflow: hidden; }
h2, h3 { font-size: 14px; line-height: 20px; font-weight: 700; }
.rows { display: grid; grid-template-columns: 88px minmax(0, 1fr); row-gap: 16px; align-items: center; grid-auto-rows: 32px; margin-top: 14px; }
.rows label { display: flex; align-items: center; gap: 3px; white-space: nowrap; }
.rows input { background: #f2f2f3; color: #81858f; font-family: "Liberation Sans", sans-serif; }
h3 { display: flex; align-items: center; gap: 8px; margin-top: 16px; padding: 18px 0 0 4px; border-top: 1px solid #e4e6eb; }
h3 .caret { color: #5f6472; }
.seg { display: flex; height: 32px; border: 1px solid #d9dde8; border-radius: 6px; color: #454a6e; }
.seg button { flex: 1; }
.seg .on { margin: -1px 0; border: 1px solid #2b73f2; }
.config { height: 32px; border: 1px solid #d9dde8; border-radius: 6px; }
.help { width: 14px; height: 14px; border: 1px solid #5c6170; border-radius: 50%; font-size: 11px; line-height: 12px; text-align: center; color: #5c6170; }
.pbar { position: absolute; right: 2px; top: 54px; width: 6px; height: 441px; border-radius: 3px; background: #ececef; }

.flow { width: 200px; flex: none; padding: 14px 13px 0 12px; }
.flow-links { display: flex; justify-content: flex-end; margin-bottom: 10px; color: #2b73f2; }
.flow-links a + a { position: relative; margin-left: 17px; }
.flow-links a + a::before { content: ""; position: absolute; left: -9px; top: 2px; height: 16px; border-left: 1px solid #e0e2e8; }
.node { display: flex; align-items: center; height: 28px; padding: 0 10px 0 6px; white-space: nowrap; }
.node span { flex: 1; padding-left: 10px; }
.dots { width: 8px; height: 14px; }
.src { background: #eaf2ff; border-radius: 14px 6px 6px 14px; }
.cur { background: #2b73f2; color: #fff; font-weight: 700; border-radius: 6px; box-shadow: inset 0 0 0 1px #2b73f2, inset 0 0 0 2px #fff; }
.cur span { padding-left: 12px; }
.wire { display: block; width: 2px; height: 28px; margin-left: 13px; background: #92b7f8; }
.add { width: 28px; height: 28px; border-radius: 50%; background: #2b73f2; }
```
